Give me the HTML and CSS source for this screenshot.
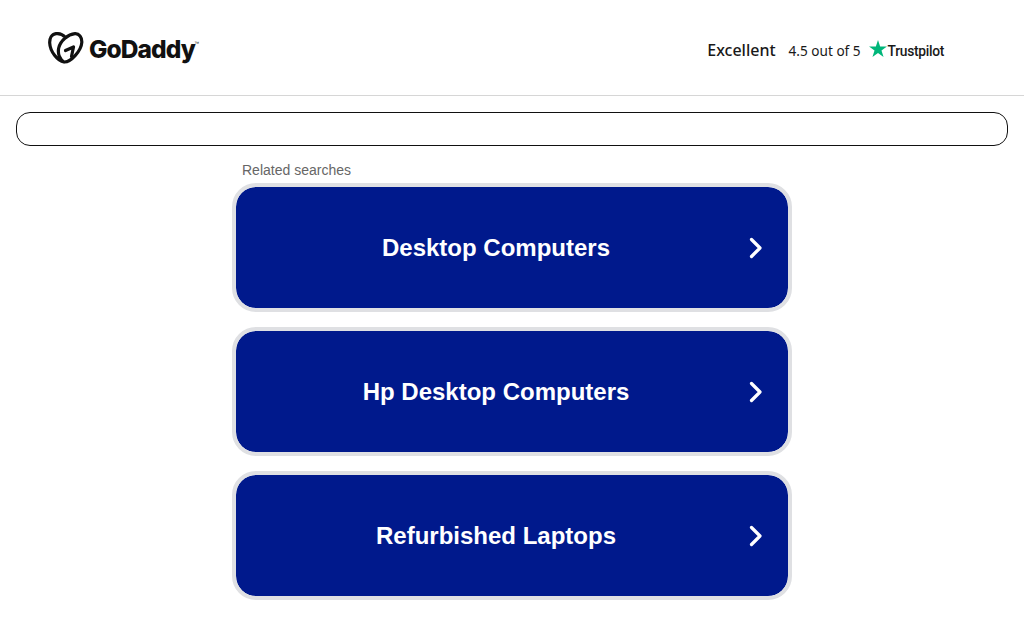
FILE: index.html
```html
<!DOCTYPE html>
<html lang="en">
<head>
<meta charset="utf-8">
<title>Related searches</title>
<link rel="stylesheet" href="styles.css">
</head>
<body>
<header class="header">
  <a class="brand" href="#">
    <svg class="brand-mark" viewBox="0 0 36 32" width="36" height="32" aria-hidden="true">
      <path class="mark-line" d="M17.500 5.500C15 2.800 11.500 1.200 8 1.700 3.500 2.300 1.500 6.500 1.700 11 2.100 19.500 9.500 29 16 30 23 30.500 33.300 18.500 33.800 10.500 34.100 5 31 1.500 27 1.700 20 2.200 12.500 8.500 10.700 16 9.400 22 12 27.500 16 30"/>
      <path class="mark-line" d="M17.500 18.500L25.500 15 23.500 24.500"/>
    </svg>
    <span class="brand-name">GoDaddy</span><span class="brand-tm">™</span>
  </a>
  <div class="rating">
    <span class="rating-word">Excellent</span>
    <span class="rating-score">4.5 out of 5</span>
    <span class="trustpilot">
      <svg class="tp-star" viewBox="0 0 20 19" width="18" height="17" aria-hidden="true">
        <path d="M10 0l2.400 7.200H20l-6.100 4.500 2.300 7.300L10 14.500 3.800 19l2.300-7.300L0 7.200h7.600z"/>
      </svg>
      <span class="tp-name">Trustpilot</span>
    </span>
  </div>
</header>
<main class="main">
  <div class="search-box"></div>
  <section class="results">
    <h2 class="results-title">Related searches</h2>
    <a class="result" href="#"><span class="result-label">Desktop Computers</span><svg class="chevron" viewBox="0 0 14 22" width="14" height="22" aria-hidden="true"><path d="M3.500 2.500L12 11l-8.500 8.500"/></svg></a>
    <a class="result" href="#"><span class="result-label">Hp Desktop Computers</span><svg class="chevron" viewBox="0 0 14 22" width="14" height="22" aria-hidden="true"><path d="M3.500 2.500L12 11l-8.500 8.500"/></svg></a>
    <a class="result" href="#"><span class="result-label">Refurbished Laptops</span><svg class="chevron" viewBox="0 0 14 22" width="14" height="22" aria-hidden="true"><path d="M3.500 2.500L12 11l-8.500 8.500"/></svg></a>
  </section>
</main>
</body>
</html>
```
FILE: styles.css
```css
* { box-sizing: border-box; }
html, body { margin: 0; padding: 0; }
body { background: #fff; overflow: hidden; height: 629px; font-family: "Liberation Sans", Arial, sans-serif; }
a { text-decoration: none; }

.header {
  height: 96px;
  border-bottom: 1px solid #d6d6d6;
  display: flex;
  justify-content: space-between;
  align-items: center;
  padding: 0 80px 0 48px;
}
.brand { display: flex; align-items: center; color: #111; }
.brand-mark { margin-right: 5px; }
.mark-line { fill: none; stroke: #111; stroke-width: 3.2; stroke-linecap: round; stroke-linejoin: round; }
.brand-name { font-family: Inter, sans-serif; font-weight: 800; font-size: 24.500px; letter-spacing: -.9px; position: relative; top: 1px; }
.brand-tm { font-size: 5px; align-self: flex-start; margin-top: 8px; margin-left: -1px; }

.rating { display: flex; align-items: center; margin-top: 5px; color: #191919; }
.rating-word { font-family: "Noto Sans", sans-serif; font-weight: 500; font-size: 16px; margin-right: 13px; }
.rating-score { font-family: "Noto Sans", sans-serif; font-size: 13.600px; margin-right: 8px; }
.trustpilot { display: flex; align-items: center; }
.tp-star { fill: #00b67a; margin-right: 1px; position: relative; top: -2px; }
.tp-name { font-family: Roboto, sans-serif; font-weight: 500; font-size: 13.800px; letter-spacing: -.3px; position: relative; top: 1px; }

.main { padding: 16px 16px 0; }
.search-box { height: 34px; border: 1px solid #111; border-radius: 14px; }
.results { width: 560px; margin: 16px auto 0; }
.results-title { margin: 0 0 5px 10px; font-size: 14px; font-weight: 400; line-height: 16px; color: #666; }
.result {
  height: 129px;
  margin-bottom: 15px;
  border: 4px solid #dfe0e3;
  border-radius: 24px;
  background: #00198c;
  background-clip: padding-box;
  display: flex;
  align-items: center;
  padding: 0 26px 0 0;
  color: #fff;
}
.result-label { flex: 1; text-align: center; font-size: 24px; font-weight: 700; line-height: 28px; padding-left: 8px; }
.chevron { fill: none; stroke: #fff; stroke-width: 3.200; stroke-linecap: round; stroke-linejoin: round; }
```
